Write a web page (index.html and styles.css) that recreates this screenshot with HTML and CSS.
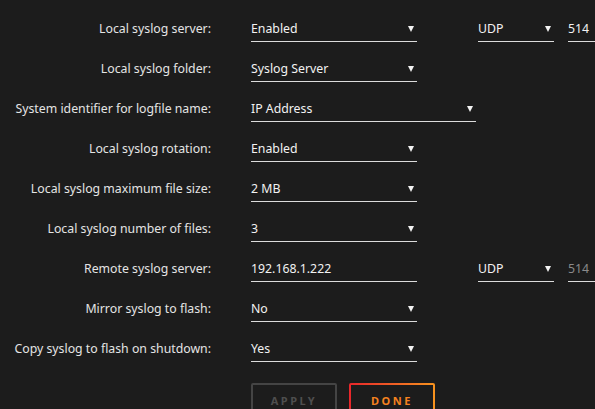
FILE: index.html
```html
<!DOCTYPE html>
<html lang="en">

<head>
    <meta charset="UTF-8">
    <meta name="viewport" content="width=device-width, initial-scale=1.0">
    <title>Syslog Settings</title>
    <link rel="stylesheet" href="styles.css">
</head>

<body>

    <div class="settings">

        <div class="row">
            <label class="label">Local syslog server:</label>
            <div class="select medium">Enabled <span class="arrow"></span></div>
            <div class="select proto">UDP <span class="arrow"></span></div>
            <div class="port">514</div>
        </div>

        <div class="row">
            <label class="label">Local syslog folder:</label>
            <div class="select medium">Syslog Server <span class="arrow"></span></div>
        </div>

        <div class="row">
            <label class="label">System identifier for logfile name:</label>
            <div class="select wide">IP Address <span class="arrow"></span></div>
        </div>

        <div class="row">
            <label class="label">Local syslog rotation:</label>
            <div class="select medium">Enabled <span class="arrow"></span></div>
        </div>

        <div class="row">
            <label class="label">Local syslog maximum file size:</label>
            <div class="select medium">2 MB <span class="arrow"></span></div>
        </div>

        <div class="row">
            <label class="label">Local syslog number of files:</label>
            <div class="select medium">3 <span class="arrow"></span></div>
        </div>

        <div class="row">
            <label class="label">Remote syslog server:</label>
            <div class="input medium">192.168.1.222</div>
            <div class="select proto">UDP <span class="arrow"></span></div>
            <div class="port disabled">514</div>
        </div>

        <div class="row">
            <label class="label">Mirror syslog to flash:</label>
            <div class="select medium">No <span class="arrow"></span></div>
        </div>

        <div class="row">
            <label class="label">Copy syslog to flash on shutdown:</label>
            <div class="select medium">Yes <span class="arrow"></span></div>
        </div>

        <!-- Apply / Done buttons -->
        <div class="buttons">
            <button class="btn apply" disabled>APPLY</button>
            <button class="btn done">DONE</button>
        </div>

    </div>

</body>

</html>
```

FILE: styles.css
```css
/* General Reset */
* {
    margin: 0;
    padding: 0;
    box-sizing: border-box;
}

body {
    font-family: "Noto Sans", "Open Sans", sans-serif;
    font-size: 12.3px;
    background-color: #1c1c1c;
    color: #e8e8e8;
    overflow: hidden;
}

.settings {
    padding-top: 8px;
}

/* One setting per row */
.row {
    display: flex;
    align-items: center;
    height: 40px;
}

.label {
    width: 211px;
    margin-right: 40px;
    padding-top: 1px;
    text-align: right;
    color: #e4e4e4;
    flex-shrink: 0;
}

.select,
.input,
.port {
    display: flex;
    align-items: center;
    justify-content: space-between;
    height: 28px;
    padding-top: 2px;
    border-bottom: 1px solid #dcdcdc;
    color: #f2f2f2;
    flex-shrink: 0;
}

.medium {
    width: 166px;
}

.wide {
    width: 225px;
}

.proto {
    width: 76px;
    margin-left: 61px;
}

.port {
    width: 40px;
    margin-left: 14px;
}

.port.disabled {
    color: #8a8a8a;
}

/* Small down arrow of the selects */
.arrow {
    width: 0;
    height: 0;
    margin-right: 3px;
    border-left: 3px solid transparent;
    border-right: 3px solid transparent;
    border-top: 6px solid #f2f2f2;
}

/* Buttons */
.buttons {
    display: flex;
    gap: 12px;
    margin-left: 251px;
    margin-top: 15px;
}

.btn {
    width: 86px;
    height: 35px;
    background: transparent;
    font-family: "Noto Sans", sans-serif;
    font-size: 11px;
    font-weight: bold;
    letter-spacing: 2.5px;
    border: 2px solid #444;
    border-radius: 2px;
}

.btn.apply {
    color: #4e4e4e;
}

.btn.done {
    color: #f5821f;
    border: 2px solid transparent;
    background: linear-gradient(#1c1c1c, #1c1c1c) padding-box,
                linear-gradient(to right, #e8262b, #f7931e) border-box;
}
```
